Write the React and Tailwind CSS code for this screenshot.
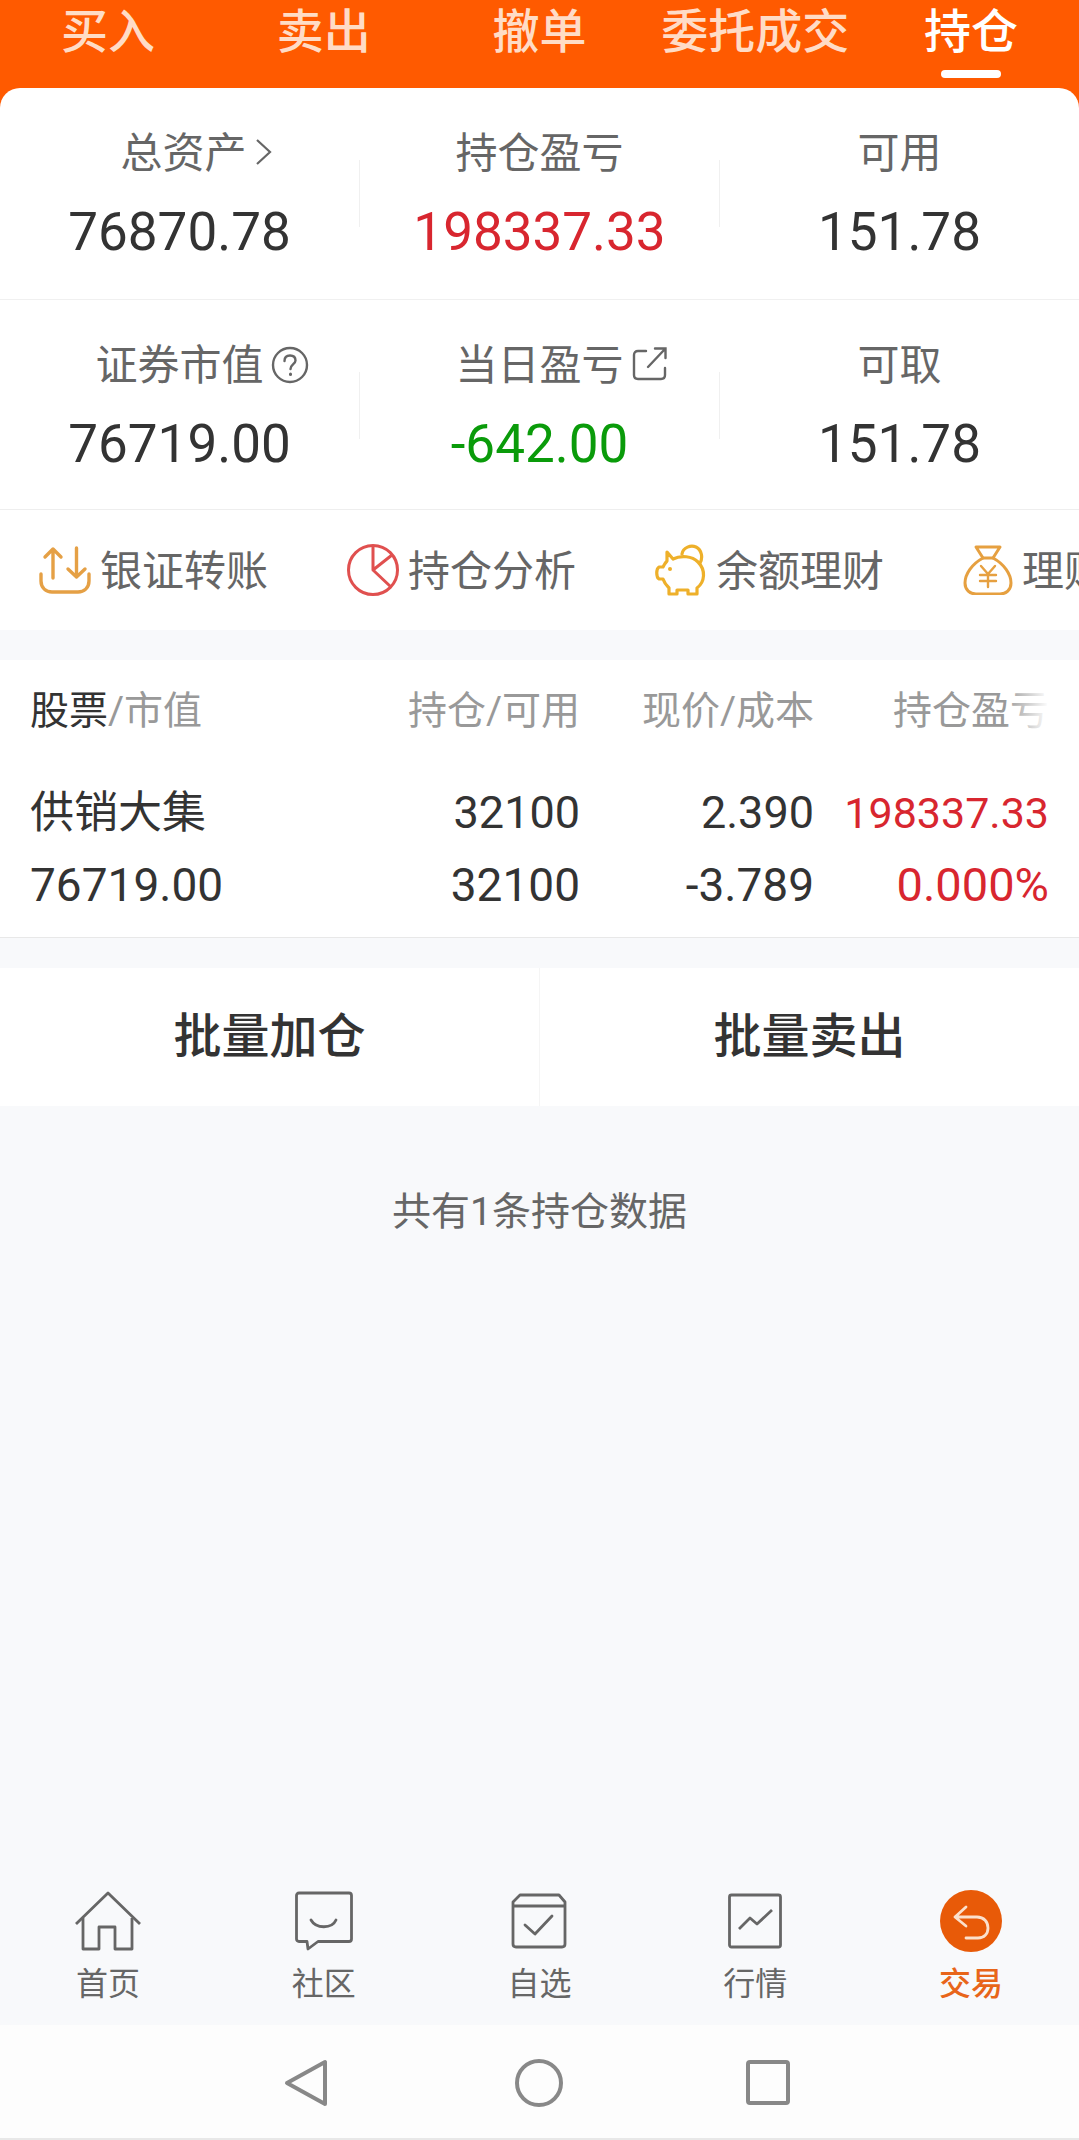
import React from 'react'

const tabs = ['买入', '卖出', '撤单', '委托成交', '持仓']

const Chevron = () => (
  <svg width="18" height="28" viewBox="0 0 18 28" fill="none" stroke="#666" strokeWidth="2.2" className="absolute left-[135px] top-[12px]">
    <path d="M2 2 L15 14 L2 26" />
  </svg>
)

const Help = () => (
  <svg width="38" height="38" viewBox="0 0 38 38" fill="none" stroke="#666" strokeWidth="2.4" strokeLinecap="round" className="absolute left-[176px] top-[8px]">
    <circle cx="19" cy="19" r="17" />
    <path d="M13.5 15 C13.5 11 16 9.5 19 9.5 C22.5 9.5 24.5 11.5 24.5 14.5 C24.5 18 19.5 18.5 19.5 23" />
    <path d="M19.5 28 V28.4" strokeWidth="3" />
  </svg>
)

const External = () => (
  <svg width="36" height="36" viewBox="0 0 36 36" fill="none" stroke="#666" strokeWidth="2.4" strokeLinecap="round" className="absolute left-[177px] top-[8px]">
    <path d="M14 5 H6 C3.5 5 2 6.5 2 9 V29 C2 32 3.5 33 6 33 H29 C32 33 33 32 33 29 V22" />
    <path d="M16 21 L33 3 M23 2.5 H33.5 V12" />
  </svg>
)

function Stat({ label, value, color = 'text-[#333]', icon, labelOffset = '' }) {
  return (
    <div className="flex-1 pt-[38px] flex flex-col items-center">
      <div className={`relative h-[56px] text-[42px] leading-[56px] text-[#666] ${labelOffset}`}>
        {label}
        {icon}
      </div>
      <div className={`h-[60px] mt-[20px] text-[53px] leading-[60px] ${color}`}>{value}</div>
    </div>
  )
}

const StatDivider = () => <div className="w-px h-[67px] mt-[72px] bg-[#f0f0f0]" />

const TransferIcon = () => (
  <svg width="52" height="50" viewBox="0 0 52 50" fill="none" stroke="#e5a045" strokeWidth="3.4" strokeLinecap="round" strokeLinejoin="round">
    <path d="M14 4 V33 M6 12 L14 4 L22 12" />
    <path d="M37.5 3 V32 M29 24 L37.5 32 L46 24" />
    <path d="M2 29 V36 C2 43 7 47 13 47 H39 C45 47 50 43 50 36 V29" />
  </svg>
)

const PieIcon = () => (
  <svg width="52" height="52" viewBox="0 0 52 52" fill="none" stroke="#e0504f" strokeWidth="3" strokeLinejoin="round">
    <circle cx="26" cy="26" r="24.5" />
    <path d="M26 2 V26 L45 11 M26 26 L44 43" />
  </svg>
)

const PigIcon = () => (
  <svg width="52" height="52" viewBox="0 0 52 52" fill="none" stroke="#eeb02a" strokeWidth="3.2" strokeLinecap="round" strokeLinejoin="round">
    <path d="M27 10 C28 3 36 1 41 3 C47 6 48 14 45 19" />
    <path d="M12 8 L18 15 C26 11 37 12 43 18 C51 26 50 38 42 44 V50 H33 V46 H22 V50 H14 V44 C11 41 9 38 8 35 H4 C1 33 1 25 4 23 H8 C9 21 10 19 12 17 Z" />
    <circle cx="15" cy="25" r="2" fill="#eeb02a" stroke="none" />
  </svg>
)

const BagIcon = () => (
  <svg width="50" height="50" viewBox="0 0 50 50" fill="none" stroke="#e6a040" strokeWidth="3" strokeLinecap="round" strokeLinejoin="round">
    <path d="M13 2 H37 L30 13 H20 Z" />
    <path d="M20 13 C9 19 2 29 2 38 C2 45 7 49 13 49 H37 C43 49 48 45 48 38 C48 29 41 19 30 13" />
    <path d="M18 21 L25 29 L32 21 M25 29 V42 M17 30 H33 M17 36 H33" strokeWidth="2.4" />
  </svg>
)

const actions = [
  { label: '银证转账', icon: <TransferIcon /> },
  { label: '持仓分析', icon: <PieIcon /> },
  { label: '余额理财', icon: <PigIcon /> },
  { label: '理财产品', icon: <BagIcon /> },
]

const HomeIcon = () => (
  <svg width="66" height="60" viewBox="0 0 66 60" fill="none" stroke="#666" strokeWidth="2.8" strokeLinejoin="round">
    <path d="M1 33 L33 2 L65 33" />
    <path d="M8 27 V58 H24 V36 H40 V58 H57 V27" />
  </svg>
)

const ChatIcon = () => (
  <svg width="58" height="60" viewBox="0 0 58 60" fill="none" stroke="#666" strokeWidth="2.8" strokeLinejoin="round" strokeLinecap="round">
    <path d="M4 2 H54 C55.5 2 56.5 3 56.5 4.5 V48 C56.5 49.5 55.5 50.5 54 50.5 H23 L13 58 L12 50.5 H4 C2.5 50.5 1.5 49.5 1.5 48 V4.5 C1.5 3 2.5 2 4 2 Z" />
    <path d="M16 29 C21 38 37 38 41 29" />
  </svg>
)

const WatchIcon = () => (
  <svg width="56" height="56" viewBox="0 0 56 56" fill="none" stroke="#666" strokeWidth="2.8" strokeLinejoin="round" strokeLinecap="round">
    <path d="M2 13 V51 C2 53 3 54 5 54 H51 C53 54 54 53 54 51 V9 L48 2 H9 L2 9 V13 H54" />
    <path d="M14 32 L24 41 L41 23" />
  </svg>
)

const MarketIcon = () => (
  <svg width="54" height="56" viewBox="0 0 54 56" fill="none" stroke="#666" strokeWidth="2.8" strokeLinejoin="round">
    <rect x="1.5" y="2" width="51" height="52" rx="2" />
    <path d="M11 36 L22 25 L29 31 L44 17" />
  </svg>
)

const TradeIcon = () => (
  <svg width="62" height="62" viewBox="0 0 62 62">
    <circle cx="31" cy="31" r="31" fill="#e85a08" />
    <path d="M26 17 L15 27 L26 36 M15 27 H37 C44 27 48 32 48 38 C48 44 44 48 38 48 H26" fill="none" stroke="#fbe0cc" strokeWidth="2.8" strokeLinecap="round" strokeLinejoin="round" />
  </svg>
)

const navItems = [
  { label: '首页', icon: <HomeIcon /> },
  { label: '社区', icon: <ChatIcon /> },
  { label: '自选', icon: <WatchIcon /> },
  { label: '行情', icon: <MarketIcon /> },
  { label: '交易', icon: <TradeIcon />, active: true },
]

const tableCols = 'grid grid-cols-[320px_230px_234px_235px]'

export default function App() {
  return (
    <div
      className="w-[1079px] h-[2140px] flex flex-col overflow-hidden bg-[#f8f9fb]"
      style={{ fontFamily: 'Roboto, "Noto Sans CJK SC", sans-serif' }}
    >
      <div className="bg-[#ff5a00]">
        <div className="grid grid-cols-5 h-[88px]">
          {tabs.map((t, i) => (
            <div key={t} className="flex flex-col items-center">
              <div className={`h-[64px] text-[47px] leading-[64px] font-medium ${i === 4 ? 'text-white' : 'text-[#ffdcc6]'}`}>{t}</div>
              {i === 4 && <div className="mt-[6px] w-[60px] h-[8px] rounded-full bg-white" />}
            </div>
          ))}
        </div>

        <div className="bg-white rounded-t-[20px]">
          <div className="flex h-[212px] border-b border-[#f0f0f0]">
            <Stat label="总资产" value="76870.78" icon={<Chevron />} labelOffset="ml-[8px]" />
            <StatDivider />
            <Stat label="持仓盈亏" value="198337.33" color="text-[#d8262f]" />
            <StatDivider />
            <Stat label="可用" value="151.78" />
          </div>
          <div className="flex h-[210px] border-b border-[#eee]">
            <Stat label="证券市值" value="76719.00" icon={<Help />} />
            <StatDivider />
            <Stat label="当日盈亏" value="-642.00" color="text-[#0a9b0a]" icon={<External />} />
            <StatDivider />
            <Stat label="可取" value="151.78" />
          </div>
          <div className="h-[120px] flex items-center overflow-hidden pl-[39px]">
            {actions.map(a => (
              <div key={a.label} className="shrink-0 w-[308px] flex items-center gap-[9px]">
                {a.icon}
                <span className="text-[42px] leading-[56px] mt-[4px] text-[#666] whitespace-nowrap">{a.label}</span>
              </div>
            ))}
          </div>
        </div>
      </div>

      <div className="mt-[30px] bg-white h-[278px] border-b border-[#e8e8e8] px-[30px] pt-[22px]">
        <div className={`relative ${tableCols} h-[58px] items-center text-[39px] text-[#999]`}>
          <div>
            <span className="text-[#333]">股票</span>/市值
          </div>
          <div className="text-right">持仓/可用</div>
          <div className="text-right">现价/成本</div>
          <div className="text-right">持仓盈亏</div>
          <div className="absolute right-0 top-0 bottom-0 w-[44px] bg-gradient-to-r from-transparent to-white" />
        </div>
        <div className={`${tableCols} mt-[39px] h-[62px] items-center text-[#333] text-[45px]`}>
          <div className="text-[44px]">供销大集</div>
          <div className="text-right">32100</div>
          <div className="text-right">2.390</div>
          <div className="text-right text-[43px] text-[#d8262f]">198337.33</div>
        </div>
        <div className={`${tableCols} mt-[9px] h-[62px] items-center text-[#333] text-[46px]`}>
          <div>76719.00</div>
          <div className="text-right">32100</div>
          <div className="text-right">-3.789</div>
          <div className="text-right text-[47px] text-[#d8262f]">0.000%</div>
        </div>
      </div>

      <div className="mt-[30px] bg-white h-[138px] flex text-[48px] font-medium text-[#333]">
        <div className="flex-1 flex items-center justify-center border-r border-[#f5f5f5]">批量加仓</div>
        <div className="flex-1 flex items-center justify-center">批量卖出</div>
      </div>

      <div className="flex-1 pt-[78px] text-center text-[39px] leading-[56px] text-[#666]">共有1条持仓数据</div>

      <div className="grid grid-cols-5 h-[163px] pt-[26px]">
        {navItems.map(n => (
          <div key={n.label} className="flex flex-col items-center">
            <div className="h-[66px] flex items-center justify-center">{n.icon}</div>
            <div className={`mt-[8px] text-[32px] leading-[44px] ${n.active ? 'text-[#e8651a] font-medium' : 'text-[#666]'}`}>{n.label}</div>
          </div>
        ))}
      </div>

      <div className="h-[115px] bg-[#fdfdfd] border-b-2 border-[#e8e8e8] flex items-start justify-center gap-[187px] pt-[34px] pr-[7px]">
        <svg width="44" height="48" viewBox="0 0 44 48" fill="none" stroke="#888" strokeWidth="4" strokeLinejoin="round" className="ml-[2px]">
          <path d="M3 24 L41 3 V45 Z" />
        </svg>
        <svg width="48" height="48" viewBox="0 0 48 48" fill="none" stroke="#888" strokeWidth="4">
          <circle cx="24" cy="24" r="22" />
        </svg>
        <svg width="44" height="46" viewBox="0 0 44 46" fill="none" stroke="#888" strokeWidth="4" strokeLinejoin="round" className="mt-px -ml-[4px]">
          <rect x="2" y="2" width="40" height="41" rx="2" />
        </svg>
      </div>
    </div>
  )
}
